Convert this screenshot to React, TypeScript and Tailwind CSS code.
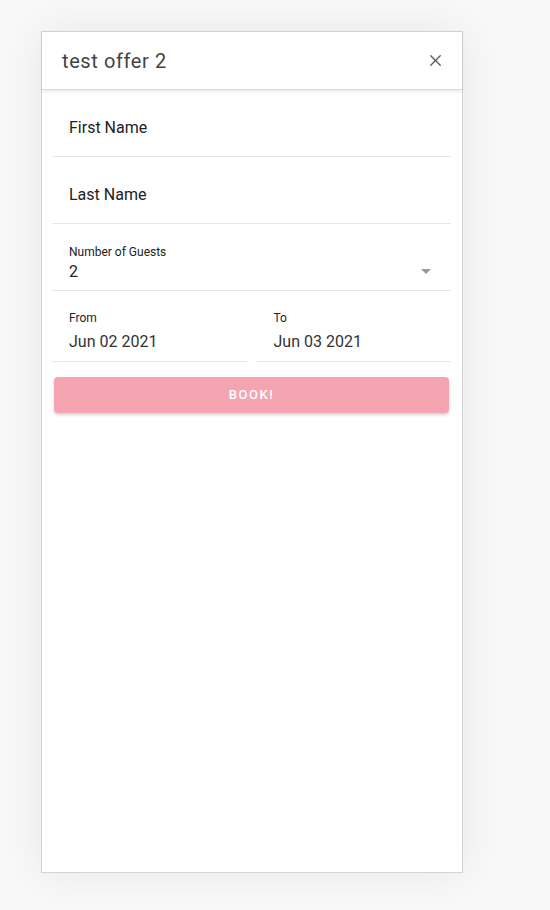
import { X } from "lucide-react";

function TextRow({ label }: { label: string }) {
  return (
    <div className="h-[67px] border-b border-[#e6e6e6] pt-[26px] pl-[17px]">
      <span className="text-[16px] leading-6 text-[#222]">{label}</span>
    </div>
  );
}

export default function App() {
  return (
    <div
      className="h-[910px] w-[550px] bg-[#f8f8f8] pt-[31px] pl-[41px]"
      style={{ fontFamily: "Roboto, 'Liberation Sans', sans-serif" }}
    >
      <div className="flex h-[842px] w-[422px] flex-col border border-[#d2d2d2] bg-white shadow-[0_0_40px_rgba(0,0,0,0.07)]">
        {/* header */}
        <header className="flex h-[58px] shrink-0 items-center justify-between border-b border-[#dcdcdc] pr-[17px] pl-5 shadow-[0_2px_3px_rgba(0,0,0,0.08)]">
          <h1 className="text-[20px] leading-none tracking-[0.03em] text-[#444]">test offer 2</h1>
          <X size={19} strokeWidth={1.6} className="text-[#555]" />
        </header>

        {/* form */}
        <div className="flex flex-col pl-[10px] pr-[11px]">
          <TextRow label="First Name" />
          <TextRow label="Last Name" />

          <div className="flex h-[67px] items-start justify-between border-b border-[#e6e6e6] pt-[20px] pl-[17px] pr-[20px]">
            <div className="flex flex-col">
              <span className="text-[12px] leading-4 text-[#222]">Number of Guests</span>
              <span className="mt-[2px] text-[16px] leading-5 text-[#222]">2</span>
            </div>
            <svg width="10" height="5" viewBox="0 0 10 5" className="mt-[25px]">
              <path d="M0 0h10L5 5z" fill="#9a9a9a" />
            </svg>
          </div>

          <div className="grid grid-cols-2 gap-[10px]">
            <div className="h-[71px] border-b border-[#e6e6e6] pt-[19px] pl-[17px]">
              <div className="text-[12px] leading-4 text-[#222]">From</div>
              <div className="mt-[4px] text-[16px] leading-6 text-[#333]">Jun 02 2021</div>
            </div>
            <div className="h-[71px] border-b border-[#e6e6e6] pt-[19px] pl-[17px]">
              <div className="text-[12px] leading-4 text-[#222]">To</div>
              <div className="mt-[4px] text-[16px] leading-6 text-[#333]">Jun 03 2021</div>
            </div>
          </div>

          <button className="mx-[2px] mt-[15px] h-[36px] rounded-[4px] bg-[#f5a5b1] text-[13px] font-medium tracking-[0.12em] text-white shadow-[0_2px_3px_rgba(0,0,0,0.18)]">
            BOOK!
          </button>
        </div>
      </div>
    </div>
  );
}
